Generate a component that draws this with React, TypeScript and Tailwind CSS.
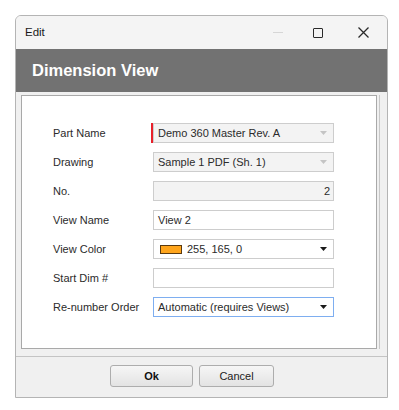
import React from "react";

const font = { fontFamily: '"Liberation Sans", Arial, sans-serif' };

function Arrow({ disabled }: { disabled?: boolean }) {
  return (
    <svg width="7" height="4" viewBox="0 0 7 4" className="shrink-0">
      <path d="M0 0h7L3.5 4z" fill={disabled ? "#c4c4c4" : "#1a1a1a"} />
    </svg>
  );
}

function Row({ label, children }: { label: string; children: React.ReactNode }) {
  return (
    <div className="flex items-center h-[20px]">
      <div className="w-[100px] shrink-0 text-[11px] text-[#2b2b2b]">{label}</div>
      {children}
    </div>
  );
}

export default function App() {
  return (
    <div className="w-[399px] h-[410px] bg-white pt-[15px] pl-[15px]" style={font}>
      <div className="w-[373px] h-[383px] border border-[#b4b4b4] rounded-t-[6px] flex flex-col bg-[#f0f0f0] overflow-hidden">
        {/* Title bar */}
        <div className="h-[33px] shrink-0 bg-[#f4f4f4] flex items-center pl-[9px] text-[11.5px] text-[#1a1a1a]">
          <span>Edit</span>
          <div className="ml-auto flex items-center">
            <div className="w-[10px] h-px bg-[#d6d6d6] mr-[30px]" />
            <div className="w-[10px] h-[10px] border-[1.5px] border-[#2a2a2a] rounded-[1px] mr-[35px]" />
            <svg width="11" height="11" viewBox="0 0 11 11" className="mr-[18px]">
              <path d="M0.5 0.5L10.5 10.5M10.5 0.5L0.5 10.5" stroke="#2a2a2a" strokeWidth="1.3" />
            </svg>
          </div>
        </div>

        {/* Header */}
        <div className="h-[43px] shrink-0 bg-[#727272] flex items-center pl-[16px] text-white font-bold text-[16.5px]">
          Dimension View
        </div>

        {/* Form panel */}
        <div className="flex-1 pt-[3px] pl-[5px] pr-[3px] flex">
          <div className="flex-1 flex flex-col border border-[#a9a9a9] bg-white h-[254px]">
            <div className="pl-[31px] pt-[27px] flex flex-col gap-[9px]">
              <Row label="Part Name">
                <div className="relative w-[181px] h-[20px] border border-[#cdcdcd] bg-[#f3f3f3] flex items-center pl-[4px] pr-[6px] text-[11px] text-[#2b2b2b]">
                  <div className="absolute left-[-3px] top-[-1px] w-[2px] h-[20px] bg-[#e8202a]" />
                  <span className="flex-1">Demo 360 Master Rev. A</span>
                  <Arrow disabled />
                </div>
              </Row>
              <Row label="Drawing">
                <div className="w-[181px] h-[20px] border border-[#cdcdcd] bg-[#f3f3f3] flex items-center pl-[4px] pr-[6px] text-[11px] text-[#2b2b2b]">
                  <span className="flex-1">Sample 1 PDF (Sh. 1)</span>
                  <Arrow disabled />
                </div>
              </Row>
              <Row label="No.">
                <div className="w-[181px] h-[20px] border border-[#cdcdcd] bg-[#f3f3f3] flex items-center justify-end pr-[3px] text-[11px] text-[#2b2b2b]">
                  2
                </div>
              </Row>
              <Row label="View Name">
                <div className="w-[181px] h-[20px] border border-[#cdcdcd] bg-white flex items-center pl-[4px] text-[11px] text-[#2b2b2b]">
                  View 2
                </div>
              </Row>
              <Row label="View Color">
                <div className="w-[181px] h-[20px] border border-[#cdcdcd] bg-white flex items-center pl-[6px] pr-[6px] text-[11px] text-[#2b2b2b]">
                  <div className="w-[22px] h-[9px] bg-[#ffa51c] border border-[#5a3a10] mr-[5px]" />
                  <span className="flex-1">255, 165, 0</span>
                  <Arrow />
                </div>
              </Row>
              <Row label="Start Dim #">
                <div className="w-[181px] h-[20px] border border-[#cdcdcd] bg-white" />
              </Row>
              <Row label="Re-number Order">
                <div className="w-[181px] h-[20px] border border-[#7eaef0] bg-white flex items-center pl-[4px] pr-[6px] text-[11px] text-[#2b2b2b]">
                  <span className="flex-1">Automatic (requires Views)</span>
                  <Arrow />
                </div>
              </Row>
            </div>
          </div>
          <div className="w-[1px] h-[254px] bg-[#c8c8c8] ml-[2px]" />
          <div className="w-[4px]" />
        </div>

        {/* Button bar */}
        <div className="h-[41px] shrink-0 border-t border-[#c4c4c4] flex items-center justify-center gap-[6px] pr-[19px] pb-[2px]">
          <button className="w-[83px] h-[22px] rounded-[3px] border border-[#adadad] bg-gradient-to-b from-[#f6f6f6] to-[#e3e3e3] text-[11px] font-bold text-[#111]">
            Ok
          </button>
          <button className="w-[75px] h-[22px] rounded-[3px] border border-[#adadad] bg-gradient-to-b from-[#f6f6f6] to-[#e3e3e3] text-[11px] text-[#222]">
            Cancel
          </button>
        </div>
      </div>
    </div>
  );
}
